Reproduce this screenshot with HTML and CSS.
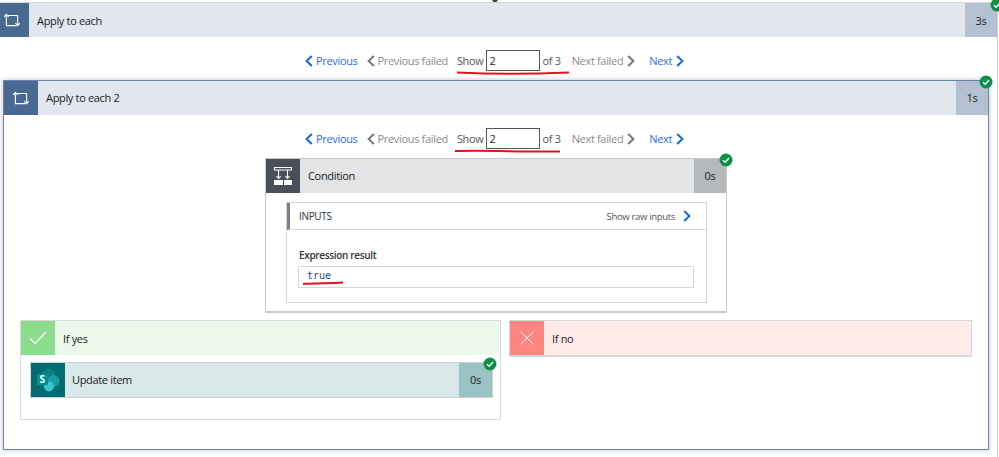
FILE: index.html
```html
<!DOCTYPE html>
<html>
<head>
<meta charset="utf-8">
<title>Run details</title>
<link rel="stylesheet" href="styles.css">
</head>
<body>
<svg class="defs" width="0" height="0">
  <symbol id="loop" viewBox="0 0 16 12">
    <path d="M3 1V11H12M1 3.200L3 1L5 3.200" fill="none" stroke="#fff" stroke-width="1"/>
    <path d="M13 11V2H4.500M11 8.800L13 11L15 8.800" fill="none" stroke="#fff" stroke-width="1"/>
  </symbol>
  <symbol id="ok" viewBox="0 0 14 14">
    <circle cx="7" cy="7" r="6.500" fill="#0c8f46"/>
    <path d="M4 7.200L6.100 9.200L10 5" fill="none" stroke="#fff" stroke-width="1.500"/>
  </symbol>
  <symbol id="prev" viewBox="0 0 8 12"><path d="M6.800 1L1.600 6L6.800 11" fill="none" stroke="currentColor" stroke-width="2"/></symbol>
  <symbol id="next" viewBox="0 0 8 12"><path d="M1.200 1L6.400 6L1.200 11" fill="none" stroke="currentColor" stroke-width="2"/></symbol>
</svg>

<div class="caret"></div>

<div class="outer">
  <div class="head head-loop">
    <div class="head-icon"><svg class="icon-loop"><use href="#loop"/></svg></div>
    <div class="head-title">Apply to each</div>
    <div class="head-time">3s</div>
  </div>
  <svg class="badge badge-top"><use href="#ok"/></svg>

  <div class="pager">
    <span class="pg-link"><svg class="chev"><use href="#prev"/></svg>Previous</span>
    <span class="pg-off pg-prevfail"><svg class="chev"><use href="#prev"/></svg>Previous failed</span>
    <span class="pg-show">Show <span class="pg-input">2</span> of 3
      <svg class="mark mark-one" viewBox="0 0 114 4"><path d="M1 1.500C30 3 80 3 113 1.500" fill="none" stroke="#e2131c" stroke-width="2"/></svg>
    </span>
    <span class="pg-off pg-nextfail">Next failed<svg class="chev"><use href="#next"/></svg></span>
    <span class="pg-link pg-next">Next<svg class="chev"><use href="#next"/></svg></span>
  </div>

  <div class="inner">
    <div class="head head-loop">
      <div class="head-icon"><svg class="icon-loop"><use href="#loop"/></svg></div>
      <div class="head-title">Apply to each 2</div>
      <div class="head-time">1s</div>
    </div>
    <svg class="badge badge-inner"><use href="#ok"/></svg>

    <div class="pager">
      <span class="pg-link"><svg class="chev"><use href="#prev"/></svg>Previous</span>
      <span class="pg-off pg-prevfail"><svg class="chev"><use href="#prev"/></svg>Previous failed</span>
      <span class="pg-show">Show <span class="pg-input">2</span> of 3
        <svg class="mark mark-two" viewBox="0 0 107 4"><path d="M1 2C30 1 70 3 106 2.500" fill="none" stroke="#e2131c" stroke-width="2"/></svg>
      </span>
      <span class="pg-off pg-nextfail">Next failed<svg class="chev"><use href="#next"/></svg></span>
      <span class="pg-link pg-next">Next<svg class="chev"><use href="#next"/></svg></span>
    </div>

    <div class="condition">
      <div class="head head-cond">
        <div class="head-icon">
          <svg class="icon-cond" viewBox="0 0 20 20">
            <path d="M1.500 1.500h17v2.500h-17zM5.500 4V12M14.500 4V12M3.300 10L5.500 12.500L7.700 10M12.300 10L14.500 12.500L16.700 10" fill="none" stroke="#fff" stroke-width="1.100"/>
            <path d="M1 14h9v5H1zM11 14h8v5h-8z" fill="#fff"/>
          </svg>
        </div>
        <div class="head-title">Condition</div>
        <div class="head-time">0s</div>
      </div>
      <svg class="badge badge-cond"><use href="#ok"/></svg>

      <div class="inputs">
        <div class="inputs-head">
          <span class="inputs-title">INPUTS</span>
          <span class="raw">Show raw inputs<svg class="chev raw-chev"><use href="#next"/></svg></span>
        </div>
        <div class="inputs-body">
          <div class="result-label">Expression result</div>
          <div class="result-box">true
            <svg class="mark mark-true" viewBox="0 0 42 4"><path d="M1 3C12 2 30 2.500 41 1.500" fill="none" stroke="#e2131c" stroke-width="2"/></svg>
          </div>
        </div>
      </div>
    </div>

    <div class="branches">
      <div class="branch branch-yes">
        <div class="head head-yes">
          <div class="head-icon">
            <svg class="icon-branch" viewBox="0 0 18 14"><path d="M1 7.500L6 12.500L17 1" fill="none" stroke="#fff" stroke-width="1.200"/></svg>
          </div>
          <div class="head-title">If yes</div>
        </div>
        <div class="action">
          <div class="head head-sp">
            <div class="head-icon">
              <svg class="icon-sp" viewBox="0 0 24 24">
                <circle cx="12.500" cy="7" r="6.500" fill="#0b7f84"/>
                <circle cx="17.500" cy="13" r="6" fill="#1a9ba1"/>
                <circle cx="13" cy="18.500" r="5" fill="#37c6d0"/>
                <rect x="1" y="6" width="11" height="11" rx="1" fill="#058f92"/>
                <text x="3.500" y="15" class="sp-letter">S</text>
              </svg>
            </div>
            <div class="head-title">Update item</div>
            <div class="head-time">0s</div>
          </div>
          <svg class="badge badge-action"><use href="#ok"/></svg>
        </div>
      </div>
      <div class="branch branch-no">
        <div class="head head-no">
          <div class="head-icon">
            <svg class="icon-x" viewBox="0 0 14 14"><path d="M0.500 0.500L13.500 13.500M13.500 0.500L0.500 13.500" fill="none" stroke="#fff" stroke-width="1"/></svg>
          </div>
          <div class="head-title">If no</div>
        </div>
      </div>
    </div>
  </div>
</div>
</body>
</html>
```

FILE: styles.css
```css
html, body {
  margin: 0;
  padding: 0;
  height: 457px;
  overflow: hidden;
  background: #fff;
}

body {
  font-family: "Open Sans", "Liberation Sans", sans-serif;
  font-size: 11px;
  letter-spacing: -0.33px;
  color: #222;
  padding-top: 2px;
  box-sizing: border-box;
}

.defs {
  display: block;
  height: 0;
}

.caret {
  position: absolute;
  left: 492px;
  top: 0;
  border-top: 4px solid #444;
  border-left: 3px solid transparent;
  border-right: 3px solid transparent;
}

.outer {
  position: relative;
  width: 998px;
  height: 455px;
  box-sizing: border-box;
  border-top: 1px solid #d8d8d8;
  border-right: 1px solid #cfcfcf;
}

/* card header */
.head {
  display: flex;
  align-items: stretch;
  height: 34px;
}

.head-icon {
  width: 34px;
  flex: none;
  display: flex;
  align-items: center;
  justify-content: center;
}

.head-title {
  flex: 1;
  padding-left: 8px;
  line-height: 34px;
}

.head-time {
  width: 32px;
  flex: none;
  text-align: center;
  line-height: 34px;
}

.head-loop { background: #e2e6ee; }
.head-loop .head-icon { background: #486991; }
.head-loop .head-time { background: #b4c1d3; }

.outer > .head .head-icon { width: 24px; padding-right: 5px; }
.outer > .head .head-title, .outer > .head .head-time { line-height: 36px; }

.head-cond { background: #e3e4e6; }
.head-cond .head-icon { background: #484f58; }
.head-cond .head-time { background: #b6b9bc; }

.head-yes { background: #ebf9ec; }
.head-yes .head-icon { background: #8bdc8d; }
.head-yes .head-title, .head-no .head-title { line-height: 36px; }

.head-no { background: #ffecea; }
.head-no .head-icon { background: #ff8680; }

.head-sp { background: #d8e8e8; }
.head-sp .head-icon { background: #036c70; }
.head-sp .head-time { background: #9ac3c6; width: 33px; }

.icon-loop { width: 18px; height: 14px; }
.icon-cond { width: 20px; height: 20px; }
.icon-branch { width: 18px; height: 14px; }
.icon-x { width: 14px; height: 14px; }
.icon-sp { width: 24px; height: 24px; }

.sp-letter {
  font-family: "Open Sans", sans-serif;
  font-size: 10px;
  font-weight: 700;
  fill: #fff;
}

/* status badges */
.badge {
  position: absolute;
  width: 14px;
  height: 14px;
}

.badge-top { right: -7px; top: -5px; }
.badge-inner { right: -5px; top: -6px; }
.badge-cond { right: -7px; top: -6px; }
.badge-action { right: -5px; top: -6px; }

/* paging row */
.pager {
  position: relative;
  display: flex;
  align-items: center;
  box-sizing: border-box;
  height: 43px;
  padding-left: 305px;
  padding-top: 4px;
  white-space: nowrap;
}

.inner .pager { padding-left: 301px; }

.chev {
  width: 8px;
  height: 12px;
  flex: none;
}

.pg-link, .pg-off, .pg-show {
  display: flex;
  align-items: center;
}

.pg-link { color: #2b6cf0; }
.pg-off { color: #8c8c8c; }
.pg-show { color: #555; position: relative; margin-left: 9px; }

.pg-link .chev { color: #1668e3; }
.pg-off .chev { color: #777; }

.pg-link > .chev:first-child, .pg-off > .chev:first-child { margin-right: 3px; }
.pg-prevfail { margin-left: 9px; }
.pg-nextfail { margin-left: 11px; }
.pg-nextfail .chev { margin-left: 4px; }
.pg-next { margin-left: 11px; }
.pg-next .chev { margin-left: 4px; }

.pg-input {
  display: block;
  box-sizing: border-box;
  width: 54px;
  height: 21px;
  margin: 0 3px 0 2px;
  padding-left: 3px;
  border: 1px solid #555;
  line-height: 19px;
  color: #222;
}

.mark {
  position: absolute;
  height: 4px;
}

.mark-one { left: -1px; top: 21px; width: 114px; }
.mark-two { left: -3px; top: 21px; width: 107px; }
.mark-true { left: 3px; top: 14px; width: 42px; }

/* condition card */
.inner {
  position: relative;
  box-sizing: border-box;
  width: 986px;
  height: 370px;
  margin-left: 3px;
  border: 1px solid #6a83a8;
  box-shadow: 0 0 5px rgba(0, 0, 0, 0.25);
}

.condition {
  position: relative;
  box-sizing: border-box;
  width: 462px;
  height: 155px;
  margin-left: 261px;
  border: 1px solid #c9c9c9;
  border-bottom-width: 2px;
}

.inputs {
  box-sizing: border-box;
  width: 421px;
  height: 101px;
  margin: 9px 0 0 20px;
  border: 1px solid #d6d6d6;
}

.inputs-head {
  display: flex;
  align-items: center;
  justify-content: space-between;
  height: 26px;
  padding: 0 15px 0 9px;
  border-left: 3px solid #7a7f87;
  border-bottom: 1px solid #d6d6d6;
}

.inputs-title {
  font-size: 10px;
  color: #2c3440;
}

.raw {
  display: flex;
  align-items: center;
  font-size: 9.500px;
  color: #555;
}

.raw-chev {
  margin-left: 8px;
  color: #1668e3;
}

.inputs-body { padding: 17px 12px 0 11px; }

.result-label {
  padding-left: 1px;
  font-size: 10px;
  font-weight: 600;
  line-height: 16px;
  color: #333;
}

.result-box {
  position: relative;
  box-sizing: border-box;
  height: 22px;
  margin-top: 3px;
  padding-left: 8px;
  border: 1px solid #d6d6d6;
  font-family: "DejaVu Sans Mono", monospace;
  font-size: 10px;
  letter-spacing: 0;
  line-height: 17px;
  color: #1f4e8a;
}

/* branches */
.branches {
  display: flex;
  align-items: flex-start;
  gap: 8px;
  margin: 7px 0 0 16px;
}

.branch {
  box-sizing: border-box;
  border: 1px solid #d9d9d9;
}

.branch-yes { width: 481px; height: 100px; }
.branch-no { width: 463px; height: 37px; border-width: 1px 1px 2px 1px; }

.action {
  position: relative;
  width: 463px;
  margin: 7px 0 0 9px;
  box-sizing: border-box;
  border: 1px solid #cfcfcf;
}

.action .head-title { padding-left: 7px; }
```
